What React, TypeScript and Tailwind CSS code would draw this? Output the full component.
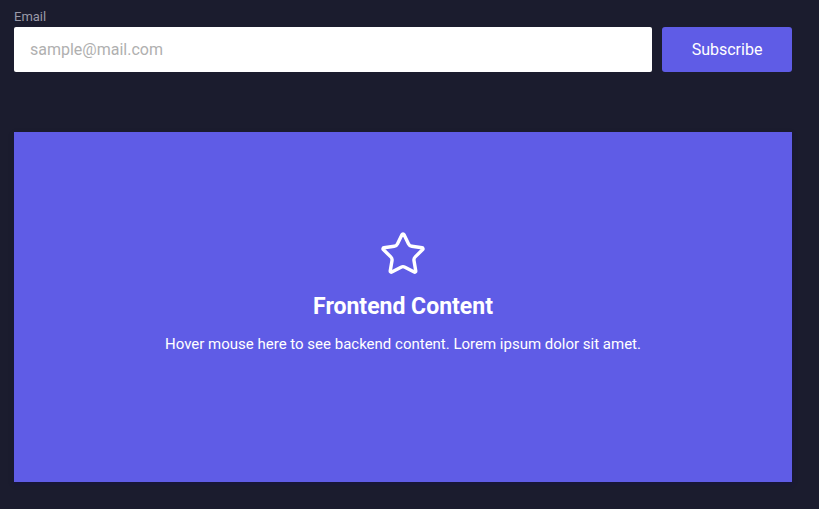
import React from 'react';
import { Star } from 'lucide-react';

const App: React.FC = () => {
  return (
    <div className="min-h-screen w-full bg-[#1b1c2e] font-['Roboto',sans-serif] px-[14px] pt-[8px]">
      <div className="w-[778px]">
        {/* Newsletter */}
        <label className="block text-[13px] leading-[17px] text-[#9a9aa8]">Email</label>
        <div className="mt-[2px] flex gap-[10px]">
          <input
            type="email"
            placeholder="sample@mail.com"
            className="h-[45px] flex-1 bg-white px-4 text-[16px] text-gray-800 placeholder:text-[#b0b0b0] outline-none rounded-[2px]"
          />
          <button className="h-[45px] w-[130px] rounded-[3px] bg-[#5f5ce6] text-[16px] text-white">Subscribe</button>
        </div>

        {/* Hover card */}
        <div className="mt-[60px] h-[350px] bg-[#5f5ce6] flex flex-col items-center pt-[98px] text-white shadow-[0_2px_4px_rgba(20,16,70,0.6)]">
          <Star size={48} strokeWidth={1.7} />
          <h2 className="mt-[15px] text-[23px] leading-[28px] font-bold">Frontend Content</h2>
          <p className="mt-[13px] text-[15px] leading-[20px]">Hover mouse here to see backend content. Lorem ipsum dolor sit amet.</p>
        </div>
      </div>
    </div>
  );
};

export default App;
